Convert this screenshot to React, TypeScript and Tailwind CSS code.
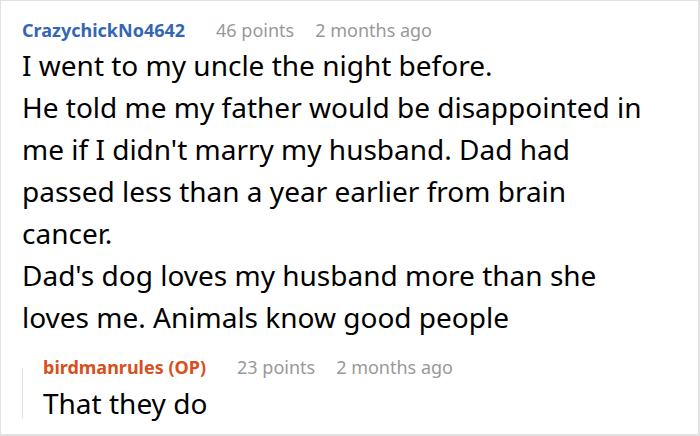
export default function App() {
  return (
    <div className="h-[436px] w-[700px] overflow-hidden border-l border-t border-r-2 border-b-2 border-[#e2e2e2] bg-white font-['Noto_Sans',sans-serif]">
      <div className="pl-[21px] pr-[44px] pt-[16px]">
        <div className="flex items-baseline text-[18px] leading-[26px]">
          <span className="mr-[31px] font-bold text-[#3566b5]">CrazychickNo4642</span>
          <span className="mr-[21px] text-[#999]">46 points</span>
          <span className="text-[#999]">2 months ago</span>
        </div>
        <p className="mt-[1px] text-[28px] leading-[42px] text-black">
          I went to my uncle the night before.
          <br />
          He told me my father would be disappointed in me if I didn't marry my husband. Dad had passed less than a year earlier from brain cancer.
          <br />
          Dad's dog loves my husband more than she loves me. Animals know good people
        </p>
        <div className="mt-[16px] flex">
          <div className="mb-[6px] mt-[14px] w-px bg-[#e2e2e2]" />
          <div className="pl-[20px]">
            <div className="flex items-baseline text-[18px] leading-[26px]">
              <span className="mr-[31px] font-bold text-[#d84f1c]">birdmanrules (OP)</span>
              <span className="mr-[21px] text-[#999]">23 points</span>
              <span className="text-[#999]">2 months ago</span>
            </div>
            <p className="mt-[2px] text-[28px] leading-[42px] text-black">That they do</p>
          </div>
        </div>
      </div>
    </div>
  );
}
